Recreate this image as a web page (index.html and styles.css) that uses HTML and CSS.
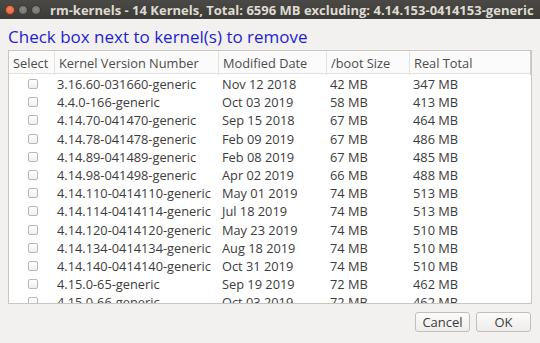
FILE: index.html
```html
<!DOCTYPE html>
<html lang="en">
<head>
    <meta charset="UTF-8">
    <title>rm-kernels</title>
    <link rel="stylesheet" href="styles.css">
</head>
<body>
    <div class="window">
        <div class="titlebar">
            <div class="controls">
                <span class="dot close"></span>
                <span class="dot"></span>
                <span class="dot"></span>
            </div>
            <div class="title">rm-kernels - 14 Kernels, Total: 6596 MB excluding: 4.14.153-0414153-generic</div>
        </div>

        <div class="content">
            <h1 class="prompt">Check box next to kernel(s) to remove</h1>

            <div class="list">
                <div class="row head">
                    <div class="cell">Select</div>
                    <div class="cell">Kernel Version Number</div>
                    <div class="cell">Modified Date</div>
                    <div class="cell">/boot Size</div>
                    <div class="cell">Real Total</div>
                </div>
                <div class="rows" id="rows"></div>
            </div>

            <div class="actions">
                <button class="btn">Cancel</button>
                <button class="btn">OK</button>
            </div>
        </div>
    </div>

    <script>
        // kernel, date, boot size, real total (only rows in view)
        const kernels = [
            ['3.16.60-031660-generic', 'Nov 12 2018', '42 MB', '347 MB'],
            ['4.4.0-166-generic', 'Oct 03 2019', '58 MB', '413 MB'],
            ['4.14.70-041470-generic', 'Sep 15 2018', '67 MB', '464 MB'],
            ['4.14.78-041478-generic', 'Feb 09 2019', '67 MB', '486 MB'],
            ['4.14.89-041489-generic', 'Feb 08 2019', '67 MB', '485 MB'],
            ['4.14.98-041498-generic', 'Apr 02 2019', '66 MB', '488 MB'],
            ['4.14.110-0414110-generic', 'May 01 2019', '74 MB', '513 MB'],
            ['4.14.114-0414114-generic', 'Jul 18 2019', '74 MB', '513 MB'],
            ['4.14.120-0414120-generic', 'May 23 2019', '74 MB', '510 MB'],
            ['4.14.134-0414134-generic', 'Aug 18 2019', '74 MB', '510 MB'],
            ['4.14.140-0414140-generic', 'Oct 31 2019', '74 MB', '510 MB'],
            ['4.15.0-65-generic', 'Sep 19 2019', '72 MB', '462 MB'],
            ['4.15.0-66-generic', 'Oct 03 2019', '72 MB', '462 MB']
        ];

        const rows = document.getElementById('rows');
        kernels.forEach(function(k) {
            const row = document.createElement('div');
            row.className = 'row';
            row.innerHTML = '<div class="cell check"><span class="box"></span></div>' +
                k.map(v => `<div class="cell">${v}</div>`).join('');
            rows.appendChild(row);
        });
    </script>
</body>
</html>
```

FILE: styles.css
```css
* {
    margin: 0;
    padding: 0;
    box-sizing: border-box;
}

body {
    font-family: "Open Sans", "Noto Sans", sans-serif;
    background: #f2f1f0;
    width: 540px;
    height: 343px;
    overflow: hidden;
}

.window {
    height: 343px;
    display: flex;
    flex-direction: column;
}

.titlebar {
    height: 19px;
    background: linear-gradient(#4a4945, #3c3b37);
    display: flex;
    align-items: center;
    padding-left: 5px;
}

.controls {
    display: flex;
    gap: 3px;
    width: 45px;
}

.dot {
    width: 10px;
    height: 10px;
    border-radius: 50%;
    background: radial-gradient(circle at 50% 40%, #8a8985, #6c6b67);
    border: 1px solid #3a3935;
}

.dot.close {
    background: radial-gradient(circle at 50% 40%, #f48563, #e05a34);
    border-color: #7a3a22;
}

.title {
    color: #dfdbd2;
    font-weight: bold;
    font-size: 13px;
    white-space: nowrap;
}

.content {
    flex: 1;
    padding: 0 8px;
    display: flex;
    flex-direction: column;
}

.prompt {
    color: #1f1fd0;
    font-weight: normal;
    font-size: 17px;
    height: 31px;
    line-height: 36px;
    white-space: nowrap;
}

.list {
    height: 254px;
    width: 524px;
    background: white;
    border: 1px solid #c9c6c1;
    overflow: hidden;
}

.row {
    display: grid;
    grid-template-columns: 46px 164px 108px 83px 1fr;
    height: 18.2px;
    align-items: center;
    font-size: 12.8px;
    color: #3c3c3c;
    white-space: nowrap;
}

.row .cell {
    padding-left: 3px;
}

.row .cell:nth-child(2) {
    padding-left: 2px;
}

.row.head {
    height: 23px;
    background: #fbfbfb;
    border-bottom: 1px solid #e4e2df;
    color: #4c4c4c;
    margin-bottom: 1px;
}

.row.head .cell {
    padding-left: 4px;
    height: 100%;
    line-height: 24px;
    border-right: 1px solid #e4e2df;
}

.row.head .cell:last-child {
    border-right-color: #cfcdc9;
}

.cell.check {
    display: flex;
    justify-content: center;
    padding-left: 0;
}

.box {
    width: 10px;
    height: 10px;
    border: 1px solid #b9b7b3;
    border-radius: 2px;
    background: linear-gradient(#ffffff, #f0efee);
    margin-left: 1px;
}

.actions {
    display: flex;
    justify-content: flex-end;
    gap: 6px;
    padding-top: 8px;
    padding-right: 1px;
}

.btn {
    width: 55px;
    height: 20px;
    padding: 0;
    font-family: "Open Sans", "Noto Sans", sans-serif;
    font-size: 13px;
    line-height: 16px;
    color: #3c3c3c;
    background: linear-gradient(#fbfbfa, #eeedec);
    border: 1px solid #c2bfbb;
    border-radius: 3px;
}
```
